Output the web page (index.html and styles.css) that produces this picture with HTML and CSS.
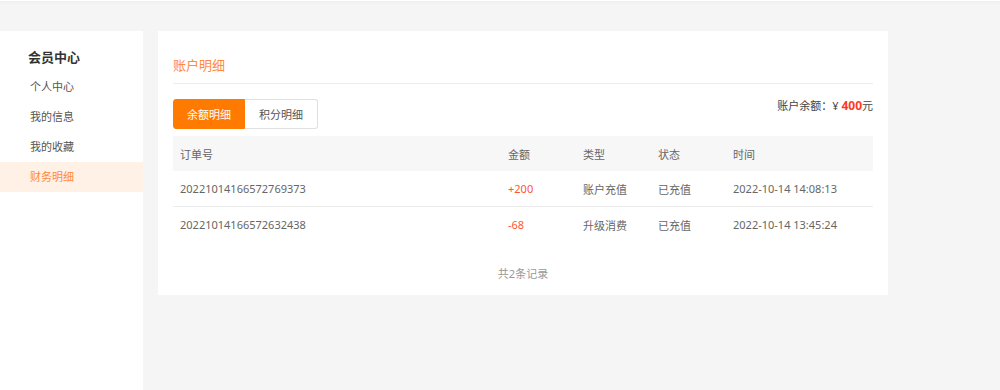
FILE: index.html
```html
<!DOCTYPE html>
<html lang="zh-CN">
  <head>
    <meta charset="UTF-8" />
    <title>账户明细</title>
    <link rel="stylesheet" href="styles.css">
  </head>
  <body>
    <div class="topbar"></div>

    <div class="page">
      <!-- 左侧菜单 -->
      <div class="side">
        <h3>会员中心</h3>
        <ul class="menu">
          <li>个人中心</li>
          <li>我的信息</li>
          <li>我的收藏</li>
          <li class="active">财务明细</li>
        </ul>
      </div>

      <!-- 账户明细 -->
      <div class="card">
        <div class="card-title">账户明细</div>

        <div class="bar">
          <div class="tabs">
            <span class="tab on">余额明细</span>
            <span class="tab">积分明细</span>
          </div>
          <div class="balance">账户余额：¥ <b>400</b>元</div>
        </div>

        <table class="list">
          <thead>
            <tr>
              <th class="c1">订单号</th>
              <th class="c2">金额</th>
              <th class="c3">类型</th>
              <th class="c4">状态</th>
              <th>时间</th>
            </tr>
          </thead>
          <tbody>
            <tr>
              <td>20221014166572769373</td>
              <td class="money">+200</td>
              <td>账户充值</td>
              <td>已充值</td>
              <td>2022-10-14 14:08:13</td>
            </tr>
            <tr>
              <td>20221014166572632438</td>
              <td class="money">-68</td>
              <td>升级消费</td>
              <td>已充值</td>
              <td>2022-10-14 13:45:24</td>
            </tr>
          </tbody>
        </table>

        <p class="total">共2条记录</p>
      </div>
    </div>
  </body>
</html>
```

FILE: styles.css
```css
body {
  margin: 0;
  background: #f5f5f5;
  font-family: "Noto Sans", "Noto Sans CJK SC", sans-serif;
  font-size: 11px;
  color: #666;
}
.topbar {
  height: 1px;
  background: #fff;
  box-shadow: 0 1px 3px rgba(0, 0, 0, 0.08);
}
.page {
  display: flex;
  align-items: flex-start;
  gap: 15px;
  padding-top: 30px;
}
.side {
  width: 143px;
  min-height: 359px;
  background: #fff;
  padding-top: 11px;
  box-sizing: border-box;
}
.side h3 {
  margin: 0;
  padding-left: 28px;
  font-size: 13px;
  line-height: 30px;
  color: #333;
}
.menu {
  list-style: none;
  margin: 0;
  padding: 0;
}
.menu li {
  padding-left: 30px;
  line-height: 30px;
  color: #555;
}
.menu li.active {
  background: #fff1e6;
  color: #ff8a3d;
}
.card {
  width: 730px;
  background: #fff;
  padding: 0 15px 11px;
  box-sizing: border-box;
}
.card-title {
  padding: 24px 0 8px;
  line-height: 20px;
  font-size: 13px;
  color: #ff8a3d;
  border-bottom: 1px solid #ececec;
}
.bar {
  display: flex;
  justify-content: space-between;
  align-items: flex-start;
  margin-top: 15px;
}
.tabs {
  display: flex;
}
.tab {
  width: 72px;
  height: 30px;
  line-height: 30px;
  text-align: center;
  border: 1px solid #e0e0e0;
  box-sizing: border-box;
  color: #555;
}
.tab.on {
  background: #ff7a00;
  border-color: #ff7a00;
  color: #fff;
  border-radius: 3px 0 0 3px;
}
.tab:last-child {
  width: 73px;
  border-left: none;
  border-radius: 0 3px 3px 0;
}
.balance {
  line-height: 14px;
  color: #444;
}
.balance b {
  color: #ff3b1f;
  font-size: 12px;
}
.list {
  width: 100%;
  margin-top: 7px;
  border-collapse: collapse;
}
.list th,
.list td {
  height: 35px;
  padding: 0 7px;
  text-align: left;
  font-weight: normal;
}
.list th {
  background: #f7f7f7;
}
.list tbody tr + tr td {
  border-top: 1px solid #ececec;
}
.c1 {
  width: 314px;
}
.c2,
.c3,
.c4 {
  width: 61px;
}
.money {
  color: #ff5533;
}
.total {
  margin: 22px 0 0;
  line-height: 20px;
  text-align: center;
  color: #999;
}
```
